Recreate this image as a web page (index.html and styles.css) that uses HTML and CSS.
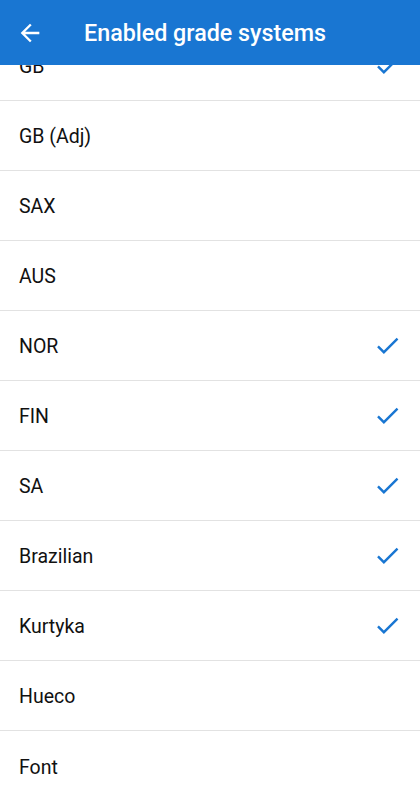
FILE: index.html
```html
<!DOCTYPE html>
<html lang="en">

<head>
    <meta charset="UTF-8">
    <meta name="viewport" content="width=device-width, initial-scale=1.0">
    <title>Enabled grade systems</title>
    <link rel="stylesheet" href="styles.css">
</head>

<body>
    <header class="app-bar">
        <button class="back-btn" aria-label="Back">
            <svg viewBox="0 0 24 24" width="28" height="28">
                <path d="M20 11H7.83l5.59-5.59L12 4l-8 8 8 8 1.41-1.41L7.83 13H20v-2z" fill="#fff" />
            </svg>
        </button>
        <h1 class="title">Enabled grade systems</h1>
    </header>

    <ul class="grade-list">
        <li class="grade-item">GB <svg class="check" viewBox="0 0 24 24"><path d="M9 16.17L4.83 12l-1.42 1.41L9 19 21 7l-1.41-1.41z" /></svg></li>
        <li class="grade-item">GB (Adj)</li>
        <li class="grade-item">SAX</li>
        <li class="grade-item">AUS</li>
        <li class="grade-item">NOR <svg class="check" viewBox="0 0 24 24"><path d="M9 16.17L4.83 12l-1.42 1.41L9 19 21 7l-1.41-1.41z" /></svg></li>
        <li class="grade-item">FIN <svg class="check" viewBox="0 0 24 24"><path d="M9 16.17L4.83 12l-1.42 1.41L9 19 21 7l-1.41-1.41z" /></svg></li>
        <li class="grade-item">SA <svg class="check" viewBox="0 0 24 24"><path d="M9 16.17L4.83 12l-1.42 1.41L9 19 21 7l-1.41-1.41z" /></svg></li>
        <li class="grade-item">Brazilian <svg class="check" viewBox="0 0 24 24"><path d="M9 16.17L4.83 12l-1.42 1.41L9 19 21 7l-1.41-1.41z" /></svg></li>
        <li class="grade-item">Kurtyka <svg class="check" viewBox="0 0 24 24"><path d="M9 16.17L4.83 12l-1.42 1.41L9 19 21 7l-1.41-1.41z" /></svg></li>
        <li class="grade-item">Hueco</li>
        <li class="grade-item">Font</li>
    </ul>
</body>

</html>
```

FILE: styles.css
```css
* {
    margin: 0;
    padding: 0;
    box-sizing: border-box;
    font-family: "Roboto", sans-serif;
}

body {
    background: #fff;
    color: #111;
    overflow: hidden;
}

.app-bar {
    position: relative; /* sits over the scrolled list */
    z-index: 1;
    display: flex;
    align-items: center;
    height: 65px;
    background: #1976d2;
    color: #fff;
}

.back-btn {
    display: flex;
    align-items: center;
    justify-content: center;
    width: 60px;
    height: 65px;
    background: none;
    border: none;
}

.title {
    margin-left: 24px;
    font-size: 23.3px;
    font-weight: 500;
}

.grade-list {
    list-style: none;
    margin-top: -34px; /* list is scrolled a bit */
}

.grade-item {
    display: flex;
    align-items: center;
    justify-content: space-between;
    height: 70px;
    padding: 2px 18px 0 19px;
    font-size: 19.5px;
    border-bottom: 1px solid #e2e2e2;
}

.grade-item:last-child {
    border-bottom: none;
}

.check {
    width: 29px;
    height: 29px;
    margin-top: -2px;
    fill: #1976d2;
}
```
